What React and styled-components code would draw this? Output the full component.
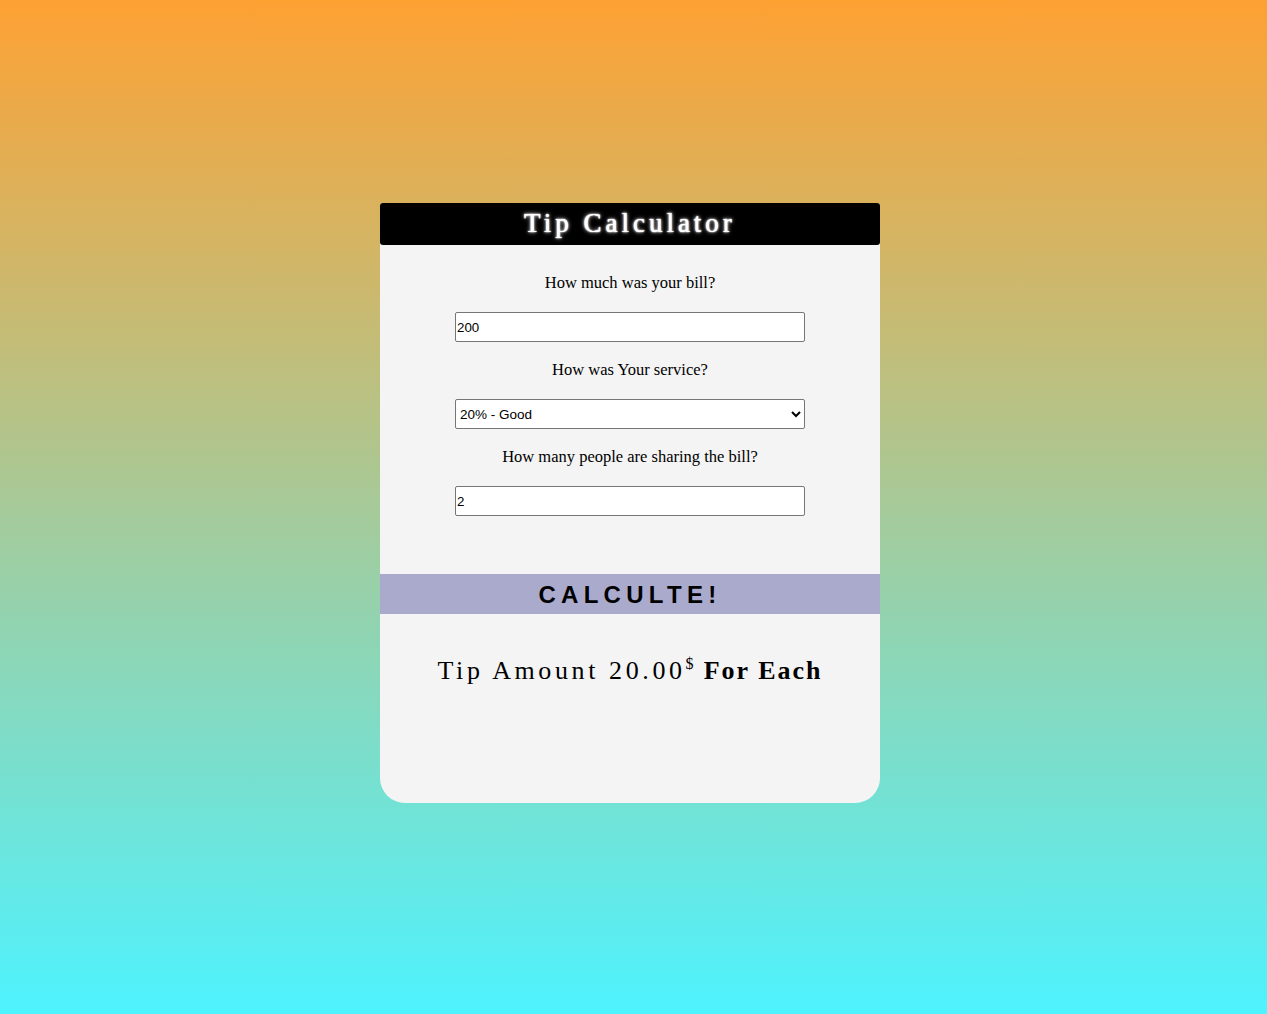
import React from "react";
import styled, { createGlobalStyle } from "styled-components";

const GlobalStyle = createGlobalStyle`
  html, body {
    margin: 0;
    padding: 0;
  }
  body {
    min-height: 1014px;
    background: linear-gradient(to bottom, #fea133, #4ef3ff);
    font-family: "Liberation Serif", serif;
  }
`;

const App = () => {
  return (
    <>
      <GlobalStyle />
      <Page>
        <Card>
          <Header>Tip Calculator</Header>
          <Form>
            <Label>How much was your bill?</Label>
            <Input type="text" defaultValue="200" />
            <Label>How was Your service?</Label>
            <Select defaultValue="20">
              <option value="30">30% - Outstanding</option>
              <option value="20">20% - Good</option>
              <option value="15">15% - It was OK</option>
              <option value="10">10% - Bad</option>
            </Select>
            <Label>How many people are sharing the bill?</Label>
            <Input type="text" defaultValue="2" />
          </Form>
          <Button>CALCULTE!</Button>
          <Result>
            Tip Amount 20.00<sup>$</sup> <Each>For Each</Each>
          </Result>
        </Card>
      </Page>
    </>
  );
};

export default App;

const Page = styled.div`
  display: flex;
  justify-content: center;
  padding-top: 203px;
  padding-right: 7px;
`;

const Card = styled.div`
  width: 500px;
  height: 600px;
  background-color: #f4f4f4;
  border-radius: 3px 3px 25px 25px;
  display: flex;
  flex-direction: column;
`;

const Header = styled.h1`
  margin: 0;
  height: 42px;
  background-color: #000;
  border-radius: 3px;
  color: #fff;
  font-family: "Liberation Serif", serif;
  font-size: 27px;
  font-weight: normal;
  letter-spacing: 4px;
  line-height: 40px;
  text-align: center;
  text-shadow: 0 0 4px #fff, 0 0 2px #fff, 0 0 1px #fff;
`;

const Form = styled.div`
  display: flex;
  flex-direction: column;
  align-items: center;
  padding-top: 28px;
`;

const Label = styled.p`
  margin: 0 0 19px;
  font-size: 16.5px;
  line-height: 20px;
  color: #000;
`;

const Input = styled.input`
  box-sizing: border-box;
  width: 350px;
  height: 30px;
  margin-bottom: 18px;
  padding: 0 1px;
  border: 1px solid #767676;
  border-radius: 2px;
  background: #fff;
  font-family: "Liberation Sans", Arial, sans-serif;
  font-size: 13.33px;
  color: #000;
`;

const Select = styled.select`
  box-sizing: border-box;
  width: 350px;
  height: 30px;
  margin-bottom: 18px;
  padding: 0;
  border: 1px solid #767676;
  border-radius: 2px;
  background: #fff;
  font-family: "Liberation Sans", Arial, sans-serif;
  font-size: 13.5px;
  color: #000;
`;

const Button = styled.button`
  margin-top: 40px;
  height: 40px;
  width: 100%;
  border: none;
  background-color: #aaaacd;
  color: #000;
  font-family: "Liberation Sans", Arial, sans-serif;
  font-size: 24px;
  font-weight: bold;
  letter-spacing: 5.3px;
  padding-top: 2px;
  cursor: pointer;
`;

const Result = styled.div`
  margin-top: 41px;
  text-align: center;
  font-family: "Liberation Serif", serif;
  font-size: 26px;
  letter-spacing: 3.6px;
  color: #000;

  sup {
    font-size: 16px;
    letter-spacing: 0;
  }
`;

const Each = styled.b`
  letter-spacing: 2px;
`;
